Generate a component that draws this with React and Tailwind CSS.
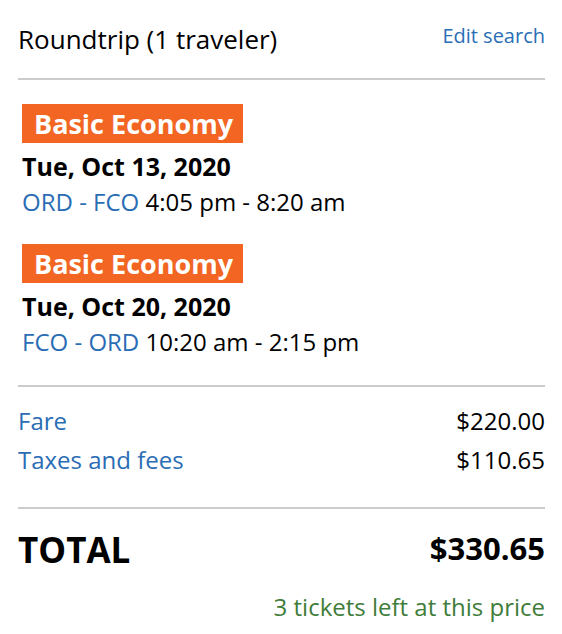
import React from "react";

function Leg({ date, from, to, times }) {
  return (
    <div className="flex flex-col items-start pl-[4px]">
      <div className="bg-[#f26522] text-white font-bold text-[27px] leading-[39px] h-[39px] pl-[12px] pr-[10px]">
        Basic Economy
      </div>
      <div className="font-bold text-[25px] leading-[34px] mt-[6px] text-black">{date}</div>
      <div className="text-[24px] leading-[32px] mt-[3px] text-black">
        <span className="text-[#2a6db5]">{from} - {to}</span> {times}
      </div>
    </div>
  );
}

export default function App() {
  return (
    <div
      className="w-[562px] h-[634px] bg-white pr-[17px] pl-[18px] pt-[22px]"
      style={{ fontFamily: '"Open Sans", sans-serif' }}
    >
      <div className="flex justify-between items-start">
        <div className="text-[26px] leading-[34px] text-black">Roundtrip (1 traveler)</div>
        <div className="text-[20px] leading-[28px] text-[#2a6db5]">Edit search</div>
      </div>
      <div className="h-[2px] bg-[#cccccc] mt-[22px]" />
      <div className="pt-[24px] flex flex-col gap-[26px]">
        <Leg date="Tue, Oct 13, 2020" from="ORD" to="FCO" times="4:05 pm - 8:20 am" />
        <Leg date="Tue, Oct 20, 2020" from="FCO" to="ORD" times="10:20 am - 2:15 pm" />
      </div>
      <div className="h-[2px] bg-[#cccccc] mt-[27px]" />
      <div className="pt-[18px] flex flex-col gap-[7px] text-[24px] leading-[32px]">
        <div className="flex justify-between">
          <span className="text-[#2a6db5]">Fare</span>
          <span className="text-black">$220.00</span>
        </div>
        <div className="flex justify-between">
          <span className="text-[#2a6db5]">Taxes and fees</span>
          <span className="text-black">$110.65</span>
        </div>
      </div>
      <div className="h-[2px] bg-[#cccccc] mt-[31px]" />
      <div className="flex justify-between items-start mt-[19px]">
        <span className="font-bold text-[35px] leading-[44px] text-black">TOTAL</span>
        <span className="font-bold text-[31px] leading-[40px] text-black">$330.65</span>
      </div>
      <div className="text-right text-[24px] leading-[32px] text-[#3f7d3a] mt-[19px]">
        3 tickets left at this price
      </div>
    </div>
  );
}
